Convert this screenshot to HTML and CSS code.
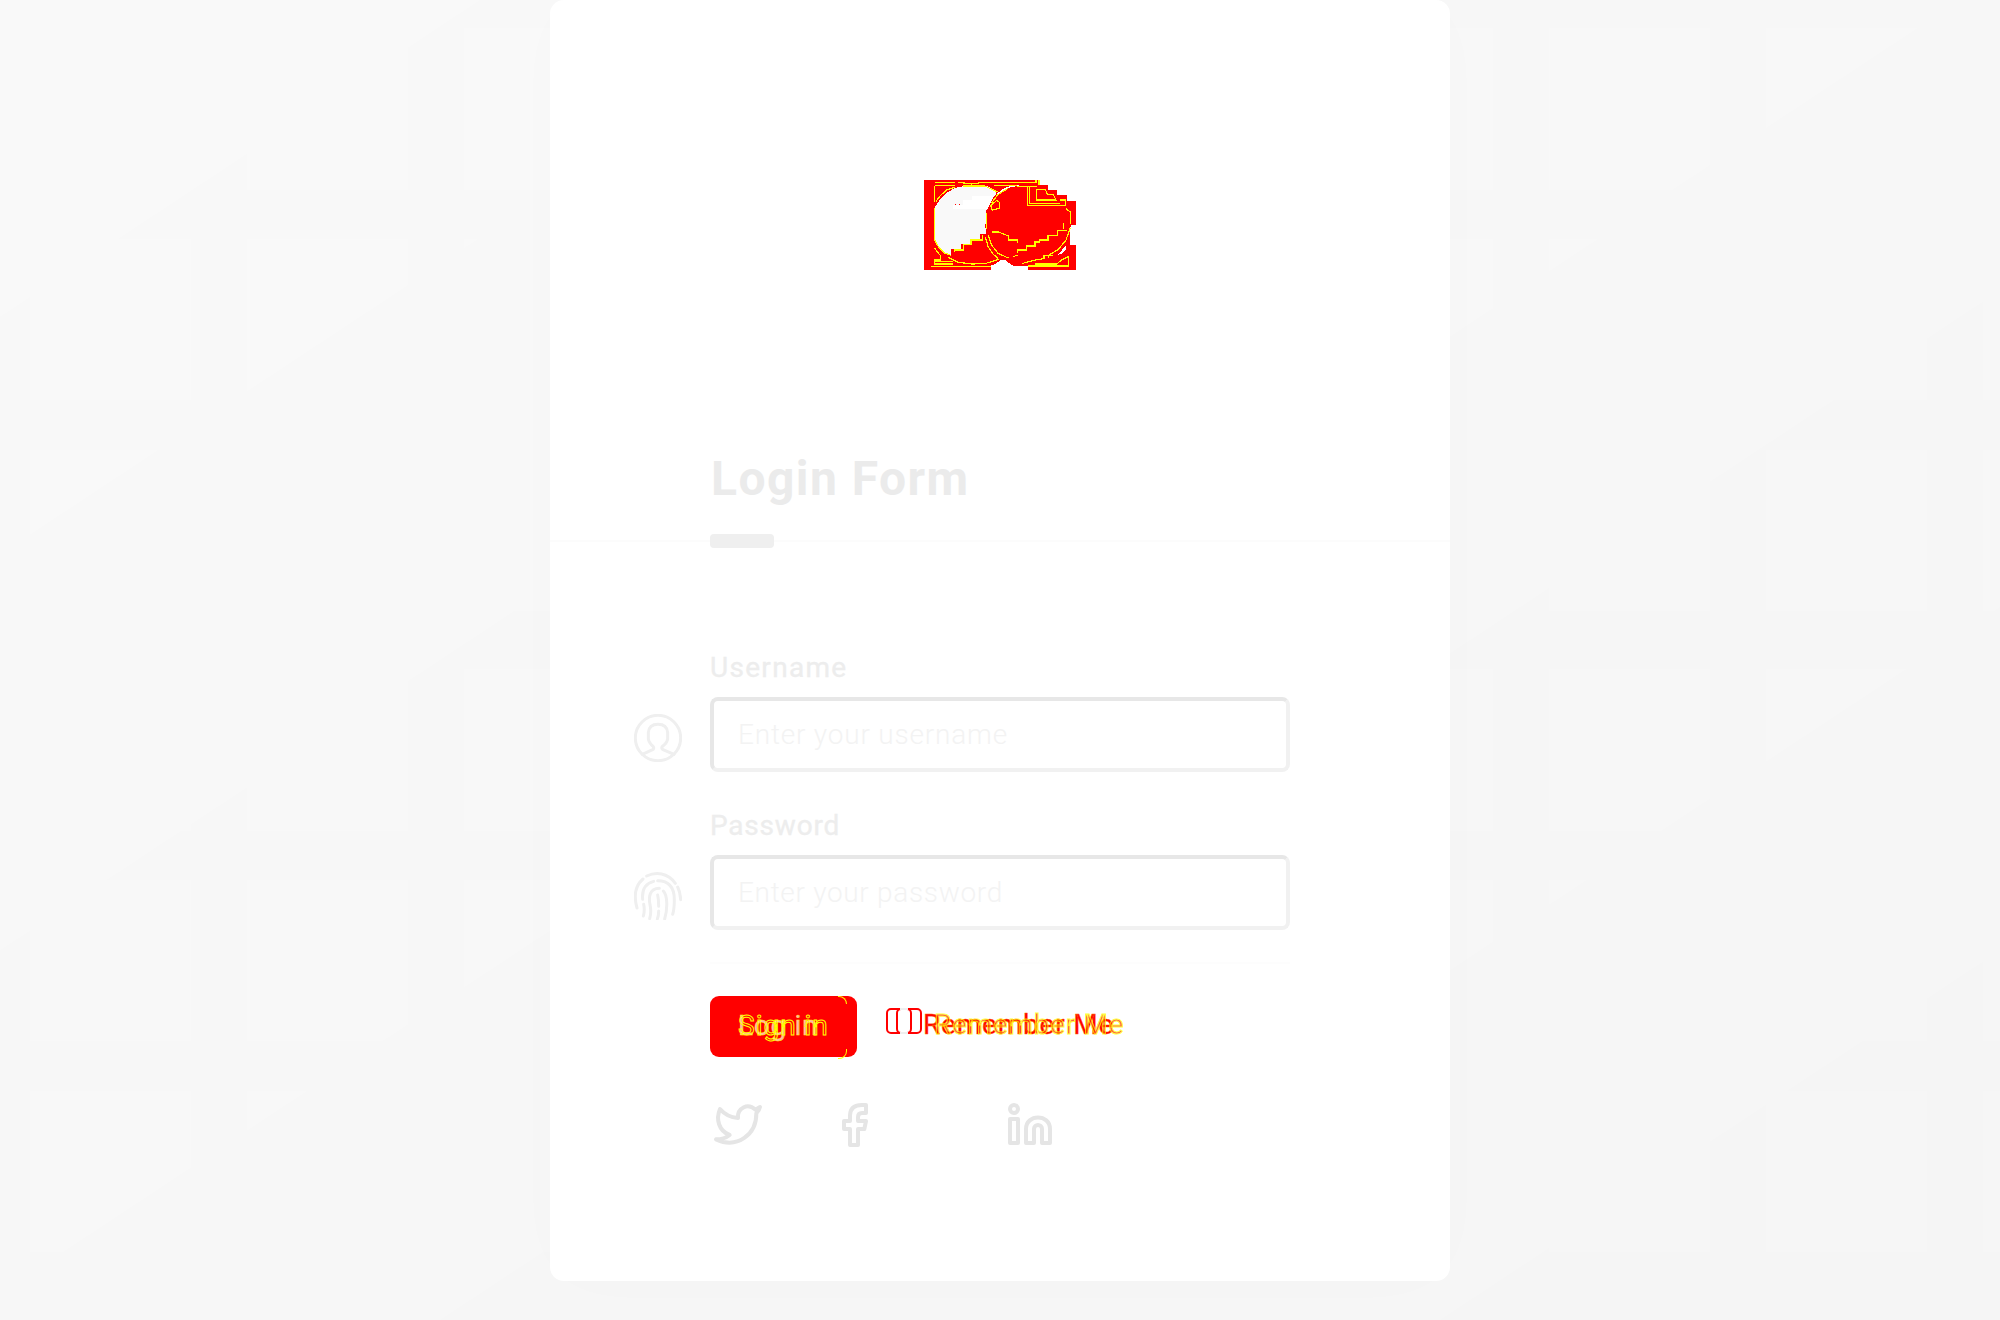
FILE: index.html
```html
<!DOCTYPE html>
<html lang="en">
<head>
<meta charset="utf-8">
<title>Login Form</title>
<link rel="stylesheet" href="styles.css">
</head>
<body>
<svg class="backdrop" viewBox="0 0 2000 1320" aria-hidden="true">
  <defs>
    <linearGradient id="base" gradientUnits="userSpaceOnUse" x1="0" y1="0" x2="1213.7" y2="1838.9"><stop offset=".12" stop-color="#f9f9f9"/><stop offset=".12" stop-color="#f8f8f8"/><stop offset=".36" stop-color="#f8f8f8"/><stop offset=".36" stop-color="#f7f7f7"/><stop offset=".61" stop-color="#f7f7f7"/><stop offset=".61" stop-color="#f6f6f6"/><stop offset=".86" stop-color="#f6f6f6"/><stop offset=".86" stop-color="#f5f5f5"/></linearGradient>
    <linearGradient id="light" gradientUnits="userSpaceOnUse" x1="0" y1="0" x2="1213.7" y2="1838.9"><stop offset=".21" stop-color="#f9f9f9"/><stop offset=".21" stop-color="#f8f8f8"/><stop offset=".49" stop-color="#f8f8f8"/><stop offset=".49" stop-color="#f7f7f7"/><stop offset=".73" stop-color="#f7f7f7"/><stop offset=".73" stop-color="#f6f6f6"/></linearGradient>
    <pattern id="tiles" patternUnits="userSpaceOnUse" x="30" y="28" width="217" height="641"><path fill="#fff" d="M0 0h161v162H0zM0 211h161v161H0zM0 422h161v161H0z"/></pattern>
    <mask id="grid" maskUnits="userSpaceOnUse" x="0" y="0" width="2000" height="1320"><rect width="2000" height="1260" fill="url(#tiles)"/></mask>
  </defs>
  <rect width="2000" height="1320" fill="url(#base)"/>
  <rect width="2000" height="1320" fill="url(#light)" mask="url(#grid)"/>
</svg>
<main class="card">
  <header class="brand">
    <svg class="logo" viewBox="0 0 600 390" shape-rendering="crispEdges">
      <path fill="red" d="M72 60H417V75H444V90H471V105H501V122H528V194H510V255H528V330H385V318H340L303 300V315H273V330H72z"/>
      <path fill="#f9f9f9" d="M104 143L118 122 140 98 165 84 194 78H260L290 92 288 102 268 128 258 155V222H240V237H213V253H183V268H153V287L135 280 118 262 104 240z"/>
      <path fill="#fff" d="M215 107H282L262 148H158V136H188V121H215zM277 318L303 300 315 300 340 318H385V330H273zM498 255L475 284 482 283 498 268z"/>
      <ellipse cx="384" cy="198" rx="128" ry="120" fill="red"/>
      <path fill="none" stroke="#fff" stroke-width="4" d="M290 104L310 88 330 80 356 76"/>
      <path fill="none" stroke="#ff0" stroke-width="3.6" d="M104 67H165M175 67L215 72 250 67H408V60M104 77V125M104 77H165M108 124L122 106 140 90 165 82M190 78H255L292 96M282 77H350M104 143V240L116 262 133 279 153 286M104 265L122 288V300H104V312H160M94 319H273M104 304H160M145 292L175 307 215 312 255 311 296 298M163 275V270H190V253H213V240H248V224M256 230L264 260 280 283 294 295M260 160V208M265 225L274 254 294 280 325 294M272 138L290 121 298 127V145L277 150zM274 130L292 106 310 93 325 85M276 216H296L325 228V240H352V250M353 279V270H379V258H405V246H418V240H444V226H472V212H500M340 290L352 285M365 311L405 300 432 296V286H460M384 318H505V290L485 300 470 312H405M382 82V137H497V120H480M388 82V130H480M410 88H436L443 104H460L468 120H410V88M417 60V75M352 79H410M498 146L511 156V192M510 205L498 240 475 268 450 283 444 292M491 190V208"/>
      <path fill="red" d="M165 132h3v3h-3zM177 132h3v3h-3z"/>
    </svg>
  </header>
  <h1 class="title">Login Form</h1>
  <div class="rule"><span class="accent"></span></div>
  <form class="form">
    <div class="field">
      <svg class="field-icon" viewBox="0 0 144 144"><circle cx="72" cy="72" r="68"/><path d="M25 121L56 107Q61 104 58 98Q44 86 43 74V56Q45 31 72 31Q99 31 101 56V74Q100 87 84 98Q82 104 87 107L120 121"/></svg>
      <label class="label username-label" for="user">Username</label>
      <input class="input input-user" id="user" placeholder="Enter your username">
    </div>
    <div class="field">
      <svg class="field-icon" viewBox="0 0 144 144"><path d="M38 12C66 -1 101 2 124 34M131 45Q139 61 140 83M27 21C1 43 0 76 9 108M26 82C23 53 33 35 59 28M71 26C107 26 121 47 121 83Q121 111 116 127M29 97Q33 116 28 132M47 140Q53 121 48 98C44 77 45 49 76 49M88 57C101 70 101 111 92 141M71 69Q74 82 74 103M74 117Q74 132 70 141"/></svg>
      <label class="label password-label" for="pass">Password</label>
      <input class="input input-pass" id="pass" placeholder="Enter your password">
    </div>
    <div class="actions">
      <button class="submit" type="button"><span class="ghost log">Log in</span><span class="ghost sign">Sign in</span></button>
      <div class="remember">
        <span class="box box-a"></span><span class="box box-b"></span><span class="box-join"></span>
        <span class="ghost mem-a">Remember Me</span><span class="ghost mem-b">Remember Me</span>
      </div>
    </div>
    <nav class="social">
      <svg class="net" viewBox="0 0 144 132"><path d="M18 18Q38 42 72 45C69 16 101 -2 124 20L138 12Q136 23 127 31C128 94 70 139 6 109Q31 109 47 96C14 84 5 48 18 18z"/></svg>
      <svg class="net fb" viewBox="0 0 78 132"><path d="M72 6V30H60Q48 30 48 43V54H72L67 78H48V126H24V78H6V54H24V37Q25 6 60 6z"/></svg>
      <svg class="net in" viewBox="0 0 132 132"><circle cx="18" cy="18" r="12"/><path d="M6 48H30V120H6zM54 120V78C54 32 126 32 126 78V120H102V78C102 62 78 62 78 78V120z"/></svg>
    </nav>
  </form>
</main>
</body>
</html>
```
FILE: styles.css
```css
* { box-sizing: border-box; }
body { margin: 0; width: 2000px; height: 1320px; overflow: hidden; background: #f7f7f7; font-family: Roboto, "Liberation Sans", sans-serif; }
.backdrop { position: absolute; inset: 0; width: 2000px; height: 1320px; }
.card { position: relative; width: 900px; height: 1281px; margin: 0 auto; background: #fff; border-radius: 14px; box-shadow: 0 0 80px rgba(0, 0, 0, .012); }
.brand { height: 440px; padding-top: 160px; }
.logo { display: block; width: 200px; height: 130px; margin: 0 auto; }
.title { height: 100px; margin: 0; padding: 10px 0 0 161px; font: 700 48px/58px Roboto, sans-serif; letter-spacing: 1.45px; color: #ebebeb; }
.rule { height: 2px; background: #fcfcfc; display: flex; align-items: center; padding-left: 160px; }
.accent { width: 64px; height: 14px; flex: none; border-radius: 4px; background: #efefef; }
.form { padding: 106px 160px 0; }
.field { position: relative; height: 158px; }
.field-icon { position: absolute; left: -76px; top: 66px; width: 48px; height: 48px; fill: none; stroke: #efefef; stroke-width: 9; stroke-linecap: round; stroke-linejoin: round; }
.label { display: block; height: 49px; padding-top: 3px; font-size: 28px; line-height: 34px; color: #ededed; -webkit-text-stroke: .3px #ededed; }
.input { display: block; width: 580px; height: 75px; padding: 0 24px 1px; border: 4px solid #e7e7e7; border-right-color: #f1f1f1; border-bottom-color: #f1f1f1; border-radius: 8px; background: #fff; font: 300 28px Roboto, sans-serif; }
.input::placeholder { color: #f3f3f3; opacity: 1; }
.username-label { letter-spacing: 1.3px; }
.password-label { letter-spacing: .8px; }
.input-user { letter-spacing: .8px; }
.input-pass { letter-spacing: .68px; }
.actions { display: flex; height: 128px; margin-top: -2px; padding-top: 32px; border-top: 2px solid #fdfdfd; }
.submit { position: relative; width: 147px; height: 61px; flex: none; padding: 0; border: 0; border-radius: 9px; background: red; }
.submit::after { content: ""; position: absolute; right: 10px; top: 0; width: 8px; height: 61px; border: solid #ff0; border-width: 1px 1px 1px 0; border-radius: 0 8px 8px 0; clip-path: polygon(0 0, 100% 0, 100% 8px, 0 8px, 0 53px, 100% 53px, 100% 100%, 0 100%); }
.ghost { position: absolute; white-space: nowrap; font: 400 28px/34px Roboto, sans-serif; }
.sign { left: 28px; top: 13px; letter-spacing: 1px; color: transparent; -webkit-text-stroke: 1px #ff0; }
.log { left: 28px; top: 13px; letter-spacing: .7px; color: rgba(255, 255, 255, .7); -webkit-text-stroke: .4px #ff0; }
.remember { position: relative; width: 250px; height: 61px; }
.box { position: absolute; top: 12px; width: 26px; height: 26px; border: 2px solid red; border-radius: 5px; }
.box-a { left: 29px; }
.box-b { left: 39px; }
.box-join { position: absolute; left: 43px; top: 12px; width: 8px; height: 26px; border: solid #efefef; border-width: 2px 0; }
.mem-a { left: 66px; top: 12px; letter-spacing: .8px; color: red; -webkit-text-stroke: .4px #f60; }
.mem-b { left: 77px; top: 12px; letter-spacing: .7px; color: #f30; -webkit-text-stroke: 1px #ff0; opacity: .75; }
.social { display: flex; align-items: flex-start; height: 50px; padding: 13px 0 0 4px; }
.net { width: 48px; height: 44px; overflow: visible; fill: none; stroke: #e5e5e5; stroke-width: 12; stroke-linecap: round; stroke-linejoin: round; }
.fb { width: 26px; margin-left: 80px; }
.in { width: 44px; margin-left: 140px; }
```
